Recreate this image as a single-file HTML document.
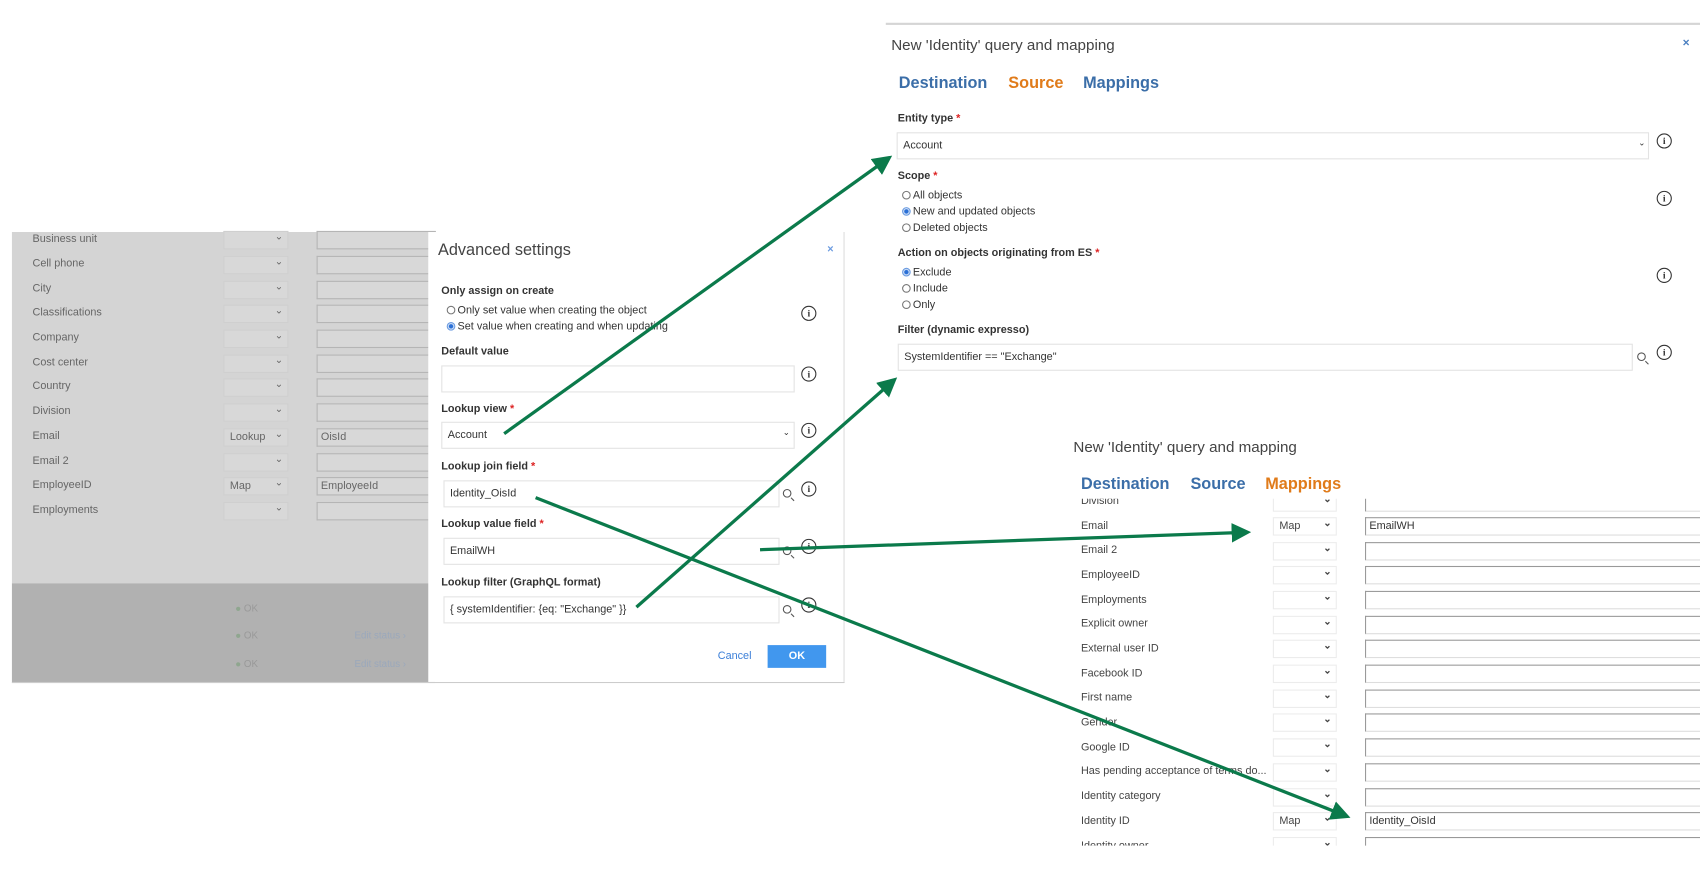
<!DOCTYPE html>
<html><head><meta charset="utf-8"><style>
*{box-sizing:border-box;margin:0;padding:0}
html,body{width:1700px;height:884px;overflow:hidden;background:#fff}
#w{position:absolute;left:0;top:0;width:1568px;height:815px;transform:scale(1.0842);transform-origin:0 0;font-family:"Liberation Sans",sans-serif;color:#333}
.a{position:absolute;white-space:nowrap}
.lbl{font-size:10px;font-weight:bold;color:#333}
.t{font-size:10px;color:#333}
.box{position:absolute;border:1px solid #e3e3e3;background:#fff}
.info{position:absolute;width:14px;height:14px;border:1.3px solid #333;border-radius:50%;font:bold 9px "Liberation Serif",serif;text-align:center;line-height:12px;color:#333}
.rad{display:inline-block;width:8px;height:8px;border:1px solid #777;border-radius:50%;vertical-align:-1px;margin-right:2px;background:#fff}
.rad.on{background:radial-gradient(#2a6fd6 40%,#cfe0f7 55%);border-color:#6b9be0}
.star{color:#d22}
.chev{position:absolute;font-size:8px;color:#333}
.srch{position:absolute;width:8px;height:8px;border:1px solid #555;border-radius:50%}
.srch:after{content:"";position:absolute;width:4px;height:1px;background:#555;left:6px;top:8px;transform:rotate(45deg)}
.bgl{font-size:10px;color:#666;position:absolute;left:30px}
.bgs{position:absolute;left:206px;width:60px;height:17px;background:#d8d8d8;border:1px solid #cfcfcf;font-size:10px;color:#666;padding-left:5px;line-height:15px}
.bgs:after{content:"⌄";position:absolute;right:4px;top:-3px;font-size:9px}
.bgi{position:absolute;left:292px;width:110px;height:17px;border:1px solid #b5b5b5;border-right:none;background:#d8d8d8;font-size:10px;color:#666;padding-left:3px;line-height:15px}
.ml{position:absolute;left:997px;font-size:10px;color:#444}
.ms{position:absolute;left:1174px;width:59px;height:17px;border:1px solid #ececec;background:#fff;font-size:10px;padding-left:5px;line-height:15px;color:#444}
.ms:after{content:"⌄";position:absolute;right:4px;top:-3px;font-size:9px;font-weight:bold}
.mi{position:absolute;left:1259px;width:310px;height:17px;border:1px solid #999;border-right:none;border-bottom-color:#ddd;border-right:none;background:#fff;font-size:10px;padding-left:3px;line-height:15px;color:#333}
</style></head><body><div id="w">

<!-- top right panel -->
<div class="a" style="left:817px;top:21px;width:751px;height:2px;background:#d5d5d5"></div>
<div class="a" style="left:822px;top:33px;font-size:14px;color:#444">New 'Identity' query and mapping</div>
<div class="a" style="left:1552px;top:34px;font-size:11px;color:#4a7fc0;font-weight:bold">×</div>
<div class="a" style="left:829px;top:68px;font-size:15px;font-weight:bold;color:#3b6ea8">Destination</div>
<div class="a" style="left:930px;top:68px;font-size:15px;font-weight:bold;color:#e07b1a">Source</div>
<div class="a" style="left:999px;top:68px;font-size:15px;font-weight:bold;color:#3b6ea8">Mappings</div>
<div class="a lbl" style="left:828px;top:104px">Entity type <span class="star">*</span></div>
<div class="box" style="left:827px;top:122px;width:694px;height:25px"></div>
<div class="a t" style="left:833px;top:129px">Account</div>
<div class="chev" style="left:1511px;top:127px">⌄</div>
<div class="info" style="left:1528px;top:123px">i</div>
<div class="a lbl" style="left:828px;top:157px">Scope <span class="star">*</span></div>
<div class="a t" style="left:832px;top:175px"><span class="rad"></span>All objects</div>
<div class="a t" style="left:832px;top:190px"><span class="rad on"></span>New and updated objects</div>
<div class="a t" style="left:832px;top:205px"><span class="rad"></span>Deleted objects</div>
<div class="info" style="left:1528px;top:176px">i</div>
<div class="a lbl" style="left:828px;top:228px">Action on objects originating from ES <span class="star">*</span></div>
<div class="a t" style="left:832px;top:246px"><span class="rad on"></span>Exclude</div>
<div class="a t" style="left:832px;top:261px"><span class="rad"></span>Include</div>
<div class="a t" style="left:832px;top:276px"><span class="rad"></span>Only</div>
<div class="info" style="left:1528px;top:247px">i</div>
<div class="a lbl" style="left:828px;top:299px">Filter (dynamic expresso)</div>
<div class="box" style="left:828px;top:317px;width:678px;height:25px"></div>
<div class="a t" style="left:834px;top:324px">SystemIdentifier == "Exchange"</div>
<div class="srch" style="left:1510px;top:325px"></div>
<div class="info" style="left:1528px;top:318px">i</div>

<!-- left background panel -->
<div class="a" style="left:11px;top:214px;width:390px;height:324px;background:#d4d4d4"></div>
<div class="a" style="left:11px;top:538px;width:390px;height:92px;background:#b1b1b1"></div>
<div class="a" style="left:11px;top:629px;width:768px;height:1px;background:#ccc"></div>
<div class="bgl" style="top:215px">Business unit</div><div class="bgs" style="top:213px"></div><div class="bgi" style="top:213px"></div>
<div class="bgl" style="top:238px">Cell phone</div><div class="bgs" style="top:236px"></div><div class="bgi" style="top:236px"></div>
<div class="bgl" style="top:261px">City</div><div class="bgs" style="top:259px"></div><div class="bgi" style="top:259px"></div>
<div class="bgl" style="top:283px">Classifications</div><div class="bgs" style="top:281px"></div><div class="bgi" style="top:281px"></div>
<div class="bgl" style="top:306px">Company</div><div class="bgs" style="top:304px"></div><div class="bgi" style="top:304px"></div>
<div class="bgl" style="top:329px">Cost center</div><div class="bgs" style="top:327px"></div><div class="bgi" style="top:327px"></div>
<div class="bgl" style="top:351px">Country</div><div class="bgs" style="top:349px"></div><div class="bgi" style="top:349px"></div>
<div class="bgl" style="top:374px">Division</div><div class="bgs" style="top:372px"></div><div class="bgi" style="top:372px"></div>
<div class="bgl" style="top:397px">Email</div><div class="bgs" style="top:395px">Lookup</div><div class="bgi" style="top:395px">OisId</div>
<div class="bgl" style="top:420px">Email 2</div><div class="bgs" style="top:418px"></div><div class="bgi" style="top:418px"></div>
<div class="bgl" style="top:442px">EmployeeID</div><div class="bgs" style="top:440px">Map</div><div class="bgi" style="top:440px">EmployeeId</div>
<div class="bgl" style="top:465px">Employments</div><div class="bgs" style="top:463px"></div><div class="bgi" style="top:463px"></div>
<div class="a" style="left:217px;top:556px;font-size:9px;color:#999"><span style="color:#8fa68f">●</span> OK</div>
<div class="a" style="left:217px;top:581px;font-size:9px;color:#999"><span style="color:#8fa68f">●</span> OK</div>
<div class="a" style="left:217px;top:607px;font-size:9px;color:#999"><span style="color:#8fa68f">●</span> OK</div>
<div class="a" style="left:327px;top:581px;font-size:9px;color:#9aa8bc">Edit status ›</div>
<div class="a" style="left:327px;top:607px;font-size:9px;color:#9aa8bc">Edit status ›</div>

<!-- dialog -->
<div class="a" style="left:395px;top:214px;width:384px;height:415px;background:#fff;border-right:1px solid #ddd"></div>
<div class="a" style="left:404px;top:222px;font-size:15px;color:#444">Advanced settings</div>
<div class="a" style="left:763px;top:225px;font-size:10px;color:#6b9be0;font-weight:bold">×</div>
<div class="a lbl" style="left:407px;top:263px">Only assign on create</div>
<div class="a t" style="left:412px;top:281px"><span class="rad"></span>Only set value when creating the object</div>
<div class="a t" style="left:412px;top:296px"><span class="rad on"></span>Set value when creating and when updating</div>
<div class="info" style="left:739px;top:282px">i</div>
<div class="a lbl" style="left:407px;top:319px">Default value</div>
<div class="box" style="left:407px;top:337px;width:326px;height:25px"></div>
<div class="info" style="left:739px;top:338px">i</div>
<div class="a lbl" style="left:407px;top:372px">Lookup view <span class="star">*</span></div>
<div class="box" style="left:407px;top:389px;width:326px;height:25px"></div>
<div class="a t" style="left:413px;top:396px">Account</div>
<div class="chev" style="left:722px;top:394px">⌄</div>
<div class="info" style="left:739px;top:390px">i</div>
<div class="a lbl" style="left:407px;top:425px">Lookup join field <span class="star">*</span></div>
<div class="box" style="left:409px;top:443px;width:310px;height:25px"></div>
<div class="a t" style="left:415px;top:450px">Identity_OisId</div>
<div class="srch" style="left:722px;top:451px"></div>
<div class="info" style="left:739px;top:444px">i</div>
<div class="a lbl" style="left:407px;top:478px">Lookup value field <span class="star">*</span></div>
<div class="box" style="left:409px;top:496px;width:310px;height:25px"></div>
<div class="a t" style="left:415px;top:503px">EmailWH</div>
<div class="srch" style="left:722px;top:504px"></div>
<div class="info" style="left:739px;top:497px">i</div>
<div class="a lbl" style="left:407px;top:532px">Lookup filter (GraphQL format)</div>
<div class="box" style="left:409px;top:550px;width:310px;height:25px"></div>
<div class="a t" style="left:415px;top:557px">{ systemIdentifier: {eq: "Exchange" }}</div>
<div class="srch" style="left:722px;top:558px"></div>
<div class="info" style="left:739px;top:551px">i</div>
<div class="a" style="left:662px;top:600px;font-size:10px;color:#3b7fd8">Cancel</div>
<div class="a" style="left:708px;top:595px;width:54px;height:21px;background:#4197ee;color:#fff;font-size:10px;font-weight:bold;text-align:center;line-height:21px">OK</div>

<!-- bottom right panel -->
<div class="a" style="left:990px;top:404px;font-size:14px;color:#444">New 'Identity' query and mapping</div>
<div class="a" style="left:997px;top:438px;font-size:15px;font-weight:bold;color:#3b6ea8">Destination</div>
<div class="a" style="left:1098px;top:438px;font-size:15px;font-weight:bold;color:#3b6ea8">Source</div>
<div class="a" style="left:1167px;top:438px;font-size:15px;font-weight:bold;color:#e07b1a">Mappings</div>
<div class="a" style="left:990px;top:460px;width:578px;height:320px;overflow:hidden">
 <div style="position:absolute;left:-990px;top:-460px;width:1568px;height:815px">
  <div class="ml" style="top:457px">Division</div><div class="ms" style="top:455px"></div><div class="mi" style="top:455px"></div>
  <div class="ml" style="top:480px">Email</div><div class="ms" style="top:477px">Map</div><div class="mi" style="top:477px">EmailWH</div>
  <div class="ml" style="top:502px">Email 2</div><div class="ms" style="top:500px"></div><div class="mi" style="top:500px"></div>
  <div class="ml" style="top:525px">EmployeeID</div><div class="ms" style="top:522px"></div><div class="mi" style="top:522px"></div>
  <div class="ml" style="top:548px">Employments</div><div class="ms" style="top:545px"></div><div class="mi" style="top:545px"></div>
  <div class="ml" style="top:570px">Explicit owner</div><div class="ms" style="top:568px"></div><div class="mi" style="top:568px"></div>
  <div class="ml" style="top:593px">External user ID</div><div class="ms" style="top:590px"></div><div class="mi" style="top:590px"></div>
  <div class="ml" style="top:616px">Facebook ID</div><div class="ms" style="top:613px"></div><div class="mi" style="top:613px"></div>
  <div class="ml" style="top:638px">First name</div><div class="ms" style="top:636px"></div><div class="mi" style="top:636px"></div>
  <div class="ml" style="top:661px">Gender</div><div class="ms" style="top:658px"></div><div class="mi" style="top:658px"></div>
  <div class="ml" style="top:684px">Google ID</div><div class="ms" style="top:681px"></div><div class="mi" style="top:681px"></div>
  <div class="ml" style="top:706px">Has pending acceptance of terms do...</div><div class="ms" style="top:704px"></div><div class="mi" style="top:704px"></div>
  <div class="ml" style="top:729px">Identity category</div><div class="ms" style="top:727px"></div><div class="mi" style="top:727px"></div>
  <div class="ml" style="top:752px">Identity ID</div><div class="ms" style="top:749px">Map</div><div class="mi" style="top:749px">Identity_OisId</div>
  <div class="ml" style="top:775px">Identity owner</div><div class="ms" style="top:772px"></div><div class="mi" style="top:772px"></div>
 </div>
</div>

<!-- arrows -->
<svg class="a" style="left:0;top:0" width="1568" height="815" viewBox="0 0 1568 815">
<defs><marker id="m" markerWidth="6" markerHeight="6" refX="4" refY="3" orient="auto" markerUnits="strokeWidth"><path d="M0,0 L6,3 L0,6 z" fill="#0b7a4b"/></marker></defs>
<g stroke="#0b7a4b" stroke-width="3" fill="none">
<line x1="465" y1="400" x2="818" y2="147" marker-end="url(#m)"/>
<line x1="587" y1="560" x2="823" y2="352" marker-end="url(#m)"/>
<line x1="701" y1="507" x2="1148" y2="491" marker-end="url(#m)"/>
<line x1="494" y1="459" x2="1240" y2="752" marker-end="url(#m)"/>
</g></svg>
</div></body></html>
